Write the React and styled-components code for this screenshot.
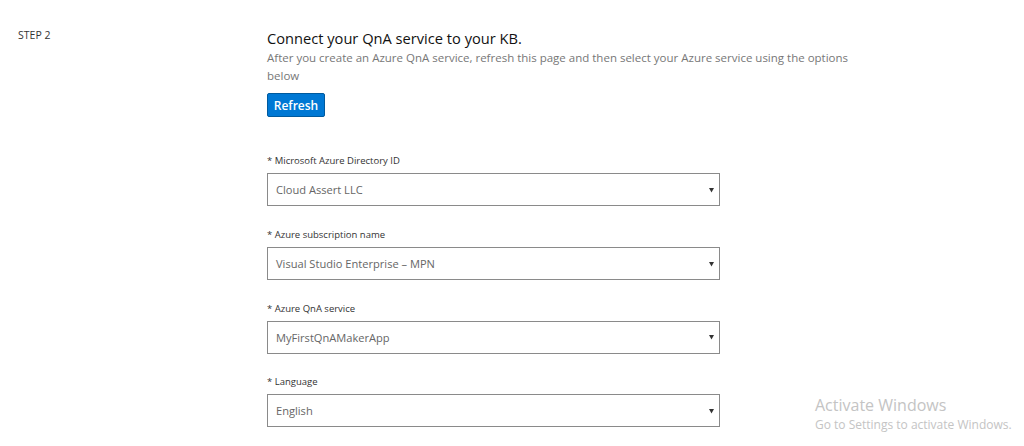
import React from "react";
import styled, { createGlobalStyle } from "styled-components";

const GlobalStyle = createGlobalStyle`
  html, body {
    margin: 0;
    height: 446px;
    overflow: hidden;
    background: #fff;
  }
  body {
    font-family: "Open Sans", "Noto Sans", "Liberation Sans", sans-serif;
  }
`;

const fields = [
  { label: "* Microsoft Azure Directory ID", value: "Cloud Assert LLC" },
  { label: "* Azure subscription name", value: "Visual Studio Enterprise – MPN" },
  { label: "* Azure QnA service", value: "MyFirstQnAMakerApp" },
  { label: "* Language", value: "English" },
];

const App = () => {
  return (
    <>
      <GlobalStyle />
      <Page>
        <StepLabel>STEP 2</StepLabel>
        <Content>
          <Title>Connect your QnA service to your KB.</Title>
          <Description>
            After you create an Azure QnA service, refresh this page and then
            select your Azure service using the options below
          </Description>
          <RefreshButton>Refresh</RefreshButton>
          <Fields>
            {fields.map((field) => (
              <Field key={field.label}>
                <FieldLabel>{field.label}</FieldLabel>
                <SelectBox>
                  <span>{field.value}</span>
                  <svg width="5" height="6" viewBox="0 0 5 6">
                    <path d="M0 1h5L2.5 5.5z" fill="#333" />
                  </svg>
                </SelectBox>
              </Field>
            ))}
          </Fields>
        </Content>
        <Watermark>
          <WatermarkTitle>Activate Windows</WatermarkTitle>
          <WatermarkText>Go to Settings to activate Windows.</WatermarkText>
        </Watermark>
      </Page>
    </>
  );
};

export default App;

const Page = styled.div`
  position: relative;
  display: grid;
  grid-template-columns: 249px 590px;
  height: 446px;
  padding: 28px 0 0 18px;
  box-sizing: border-box;
  overflow: hidden;
`;

const StepLabel = styled.div`
  font-size: 10.5px;
  line-height: 14px;
  font-weight: 500;
  color: #333;
`;

const Content = styled.div`
  display: flex;
  flex-direction: column;
  align-items: flex-start;
`;

const Title = styled.h2`
  margin: 0;
  font-size: 14.65px;
  line-height: 21px;
  font-weight: 500;
  color: #111;
`;

const Description = styled.p`
  margin: 0;
  font-size: 11.5px;
  line-height: 18px;
  color: #777;
`;

const RefreshButton = styled.button`
  margin-top: 8px;
  width: 58px;
  height: 24px;
  padding: 0;
  border: 1px solid #005a9e;
  border-radius: 2px;
  background: #0078d4;
  color: #fff;
  font-family: inherit;
  font-size: 12px;
  font-weight: 600;
`;

const Fields = styled.div`
  display: flex;
  flex-direction: column;
  gap: 21.67px;
  margin-top: 37.4px;
`;

const Field = styled.div`
  display: flex;
  flex-direction: column;
  gap: 5px;
`;

const FieldLabel = styled.label`
  font-size: 9.5px;
  line-height: 14px;
  font-weight: 500;
  color: #333;
`;

const SelectBox = styled.div`
  display: flex;
  align-items: center;
  justify-content: space-between;
  box-sizing: border-box;
  width: 453px;
  height: 33px;
  padding: 0 5px 0 8px;
  border: 1px solid #8a8a8a;
  font-size: 11.1px;
  color: #666;
`;

const Watermark = styled.div`
  position: absolute;
  left: 815px;
  top: 394px;
  color: #c4c4c4;
`;

const WatermarkTitle = styled.div`
  font-size: 16px;
  line-height: 22px;
`;

const WatermarkText = styled.div`
  margin-top: 1px;
  font-size: 12px;
  line-height: 16px;
`;
